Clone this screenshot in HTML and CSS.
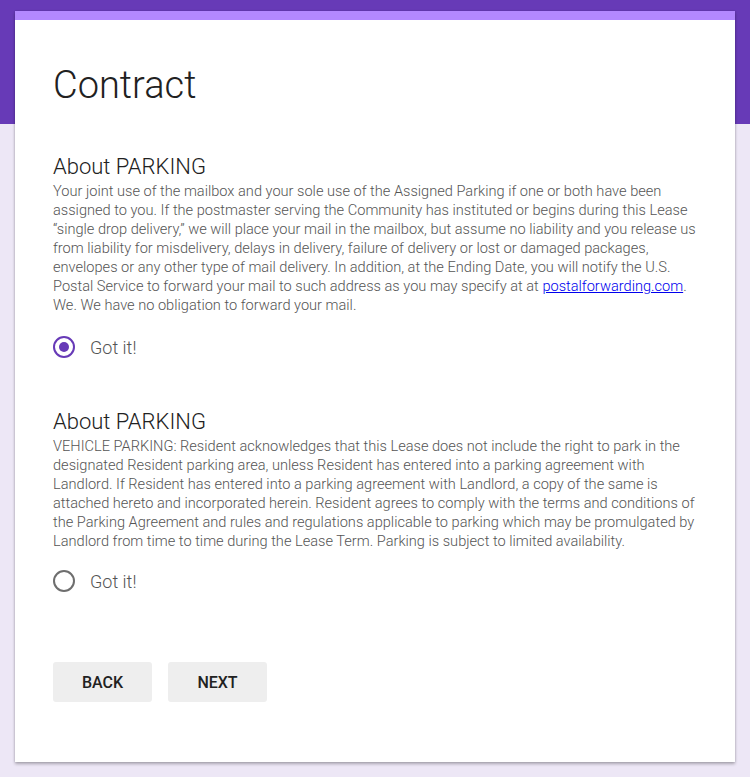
FILE: index.html
```html
<!DOCTYPE html>
<html lang="en">
<head>
<meta charset="utf-8">
<title>Contract</title>
<link rel="stylesheet" href="styles.css">
</head>
<body>
<main class="card">
  <h1 class="title">Contract</h1>

  <section class="question">
    <h2 class="q-title">About PARKING</h2>
    <p class="q-text">Your joint use of the mailbox and your sole use of the Assigned Parking if one or both have been assigned to you. If the postmaster serving the Community has instituted or begins during this Lease “single drop delivery,” we will place your mail in the mailbox, but assume no liability and you release us from liability for misdelivery, delays in delivery, failure of delivery or lost or damaged packages, envelopes or any other type of mail delivery. In addition, at the Ending Date, you will notify the U.S. Postal Service to forward your mail to such address as you may specify at at <a href="#" class="link">postalforwarding.com</a>. We. We have no obligation to forward your mail.</p>
    <label class="option">
      <span class="radio radio-on"><span class="dot"></span></span>
      <span class="option-label">Got it!</span>
    </label>
  </section>

  <section class="question">
    <h2 class="q-title">About PARKING</h2>
    <p class="q-text">VEHICLE PARKING: Resident acknowledges that this Lease does not include the right to park in the designated Resident parking area, unless Resident has entered into a parking agreement with Landlord. If Resident has entered into a parking agreement with Landlord, a copy of the same is attached hereto and incorporated herein. Resident agrees to comply with the terms and conditions of the Parking Agreement and rules and regulations applicable to parking which may be promulgated by Landlord from time to time during the Lease Term. Parking is subject to limited availability.</p>
    <label class="option option-tight">
      <span class="radio"></span>
      <span class="option-label">Got it!</span>
    </label>
  </section>

  <div class="actions">
    <button class="btn">BACK</button>
    <button class="btn">NEXT</button>
  </div>
</main>
</body>
</html>
```

FILE: styles.css
```css
* { box-sizing: border-box; }

html, body { margin: 0; padding: 0; }

body {
  background: linear-gradient(to bottom, #673ab7 0, #673ab7 124px, #ede7f6 124px, #ede7f6 100%);
  min-height: 777px;
  font-family: Roboto, "Liberation Sans", sans-serif;
  padding: 11px 15px 14px;
}

.card {
  width: 720px;
  background: #fff;
  border-top: 9px solid #b388ff;
  box-shadow: 0 2px 3px rgba(0, 0, 0, 0.28), 0 0 2px rgba(0, 0, 0, 0.12);
  padding: 43px 38px 60px 38px;
}

.title {
  margin: 0;
  font-size: 38px;
  line-height: 44px;
  font-weight: 300;
  color: #212121;
}

.question { margin-top: 46px; }
.question + .question { margin-top: 49px; }

.q-title {
  margin: 0;
  font-size: 22px;
  line-height: 28px;
  font-weight: 300;
  color: #212121;
}

.q-text {
  margin: 1px 0 0;
  font-size: 14.6px;
  line-height: 19px;
  font-weight: 300;
  color: #555;
}

.link { color: #0000ee; }

.option {
  display: flex;
  align-items: center;
  gap: 15px;
  height: 24px;
  margin-top: 20px;
}

.option-tight { margin-top: 18px; }

.radio {
  width: 22px;
  height: 22px;
  border-radius: 50%;
  border: 2px solid #6e6e6e;
  display: flex;
  align-items: center;
  justify-content: center;
}

.radio-on { border-color: #673ab7; }

.dot {
  width: 10px;
  height: 10px;
  border-radius: 50%;
  background: #673ab7;
}

.option-label {
  font-size: 18px;
  font-weight: 300;
  color: #555;
}

.actions {
  display: flex;
  gap: 16px;
  margin-top: 69px;
}

.btn {
  width: 99px;
  height: 40px;
  border: none;
  border-radius: 3px;
  background: #eeeeee;
  font-family: Roboto, "Liberation Sans", sans-serif;
  font-size: 16px;
  font-weight: 500;
  color: #212121;
}
```
